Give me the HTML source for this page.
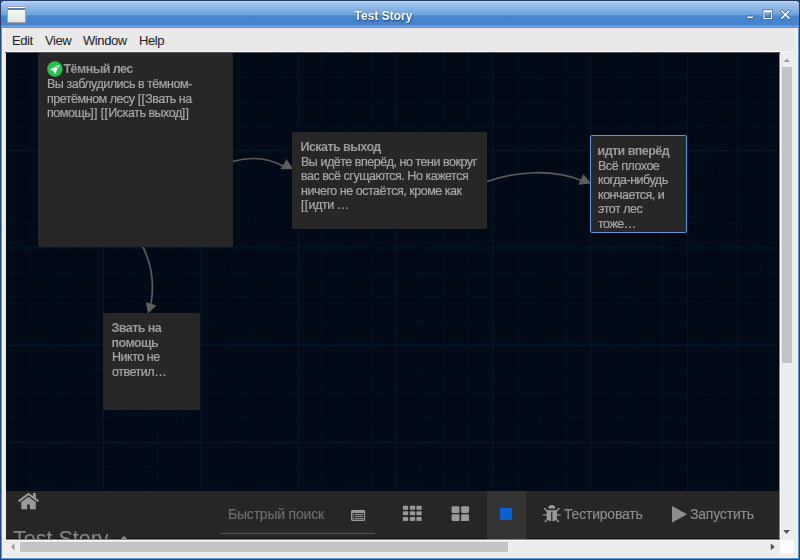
<!DOCTYPE html>
<html><head><meta charset="utf-8">
<style>
html,body{margin:0;padding:0;width:800px;height:560px;overflow:hidden;background:#1e3c64;}
*{box-sizing:border-box;}
body{font-family:"Liberation Sans",sans-serif;position:relative;}
.abs{position:absolute;}
#title{position:absolute;left:1px;top:1px;width:798px;height:27px;border-radius:3px 3px 0 0;
  background:linear-gradient(to bottom,#c8ddf4 0px,#a9c8ed 1.5px,#8db7e6 7px,#6ea2de 13.5px,#4a88d0 15px,#4382cc 20px,#4887cf 24px,#6fa6e4 25.5px,#74a9e6 26px,#3f7fcb 27px);}
#frameL{position:absolute;left:1px;top:27px;width:1px;height:532px;background:#5895dc;}
#frameR{position:absolute;left:798px;top:27px;width:1px;height:532px;background:#5895dc;}
#frameB{position:absolute;left:1px;top:558px;width:798px;height:1px;background:#5895dc;}
#content{position:absolute;left:2px;top:28px;width:796px;height:530px;background:#ededed;}
#menubar{position:absolute;left:6px;top:28px;width:788px;height:23px;background:#e9e9e9;}
.menu{position:absolute;top:0;font-size:13px;letter-spacing:-0.4px;color:#202020;line-height:24px;}
#canvas{position:absolute;left:6px;top:53px;width:773px;height:486px;background:#010a16;overflow:hidden;}
.card{position:absolute;background:#272727;border-radius:2px;}
.txt{position:absolute;will-change:transform;font-size:12.5px;letter-spacing:-0.47px;line-height:14.6px;color:#a8a8a8;white-space:nowrap;-webkit-text-stroke:0.2px #a8a8a8;}
.txt i{font-style:normal;letter-spacing:0.3px;}
.txt b{position:relative;left:-0.5px;font-weight:bold;letter-spacing:-0.55px;color:#9c9c9c;-webkit-text-stroke:0;}
#toolbar{position:absolute;left:6px;top:491px;width:773px;height:48px;background:#262626;}
.tb{position:absolute;will-change:transform;font-size:14px;letter-spacing:-0.2px;color:#8e8e8e;-webkit-text-stroke:0.15px currentColor;white-space:nowrap;line-height:16px;}
</style></head><body>
<div id="title"></div>
<div id="frameL"></div><div id="frameR"></div><div id="frameB"></div>
<div class="abs" style="left:0;top:27px;width:1px;height:533px;background:#264a7a"></div><div class="abs" style="left:799px;top:27px;width:1px;height:533px;background:#264a7a"></div><div class="abs" style="left:0;top:559px;width:800px;height:1px;background:#264a7a"></div>
<div id="content"></div>
<div class="abs" style="left:2px;top:28px;width:1px;height:530px;background:#f6f4f1"></div>
<div class="abs" style="left:2px;top:557px;width:796px;height:1px;background:#f6f4f1"></div>
<div class="abs" style="left:797px;top:28px;width:1px;height:530px;background:#f6f4f1"></div>
<div id="menubar"></div>
<div class="abs" style="left:4px;top:51px;width:790px;height:1px;background:#f6f6f6"></div>
<div class="abs" style="left:5px;top:52px;width:775px;height:1px;background:#505458"></div>
<!-- window icon -->
<div class="abs" style="left:7px;top:6px;width:19px;height:17px;border:1px solid #a8a49c;background:linear-gradient(#ffffff,#e4e4e0);border-radius:1px"></div>
<div class="abs" style="left:8px;top:8px;width:17px;height:1.5px;background:#5a7db4"></div>
<div class="abs" style="left:0px;top:7.5px;width:767px;text-align:center;font-size:12px;font-weight:bold;color:#ffffff;text-shadow:0.5px 0.5px 1.5px #1f3d66;line-height:16px;will-change:transform">Test Story</div>
<!-- title buttons -->
<svg class="abs" style="left:740px;top:6px" width="56" height="18">
  <rect x="7" y="10" width="6.5" height="2.6" rx="0.5" fill="#ffffff" stroke="#34598c" stroke-width="0.9"/>
  <rect x="24" y="4.8" width="7.6" height="7.8" fill="none" stroke="#34598c" stroke-width="2.6"/>
  <rect x="24" y="4.8" width="7.6" height="7.8" fill="none" stroke="#ffffff" stroke-width="1.2"/>
  <rect x="24" y="4.5" width="7.6" height="1.8" fill="#ffffff"/>
  <path d="M41.8 5.2 L49 12.2 M49 5.2 L41.8 12.2" stroke="#34598c" stroke-width="3" stroke-linecap="round"/>
  <path d="M41.8 5.2 L49 12.2 M49 5.2 L41.8 12.2" stroke="#ffffff" stroke-width="1.7" stroke-linecap="round"/>
</svg>
<div class="menu" style="left:12px;top:28.6px">Edit</div>
<div class="menu" style="left:45px;top:28.6px">View</div>
<div class="menu" style="left:83px;top:28.6px">Window</div>
<div class="menu" style="left:139px;top:28.6px">Help</div>

<div id="canvas">
<svg width="773" height="486" style="position:absolute;left:0;top:0"><rect x="24.04" y="0" width="1" height="486" fill="#021128"/><rect x="48.38" y="0" width="1" height="486" fill="#021128"/><rect x="72.72" y="0" width="1" height="486" fill="#021128"/><rect x="97.06" y="0" width="1" height="486" fill="#021935"/><rect x="121.40" y="0" width="1" height="486" fill="#021128"/><rect x="145.74" y="0" width="1" height="486" fill="#021128"/><rect x="170.08" y="0" width="1" height="486" fill="#021128"/><rect x="194.42" y="0" width="1" height="486" fill="#021935"/><rect x="218.76" y="0" width="1" height="486" fill="#021128"/><rect x="243.10" y="0" width="1" height="486" fill="#021128"/><rect x="267.44" y="0" width="1" height="486" fill="#021128"/><rect x="291.78" y="0" width="1" height="486" fill="#021935"/><rect x="316.12" y="0" width="1" height="486" fill="#021128"/><rect x="340.46" y="0" width="1" height="486" fill="#021128"/><rect x="364.80" y="0" width="1" height="486" fill="#021128"/><rect x="389.14" y="0" width="1" height="486" fill="#021935"/><rect x="413.48" y="0" width="1" height="486" fill="#021128"/><rect x="437.82" y="0" width="1" height="486" fill="#021128"/><rect x="462.16" y="0" width="1" height="486" fill="#021128"/><rect x="486.50" y="0" width="1" height="486" fill="#021935"/><rect x="510.84" y="0" width="1" height="486" fill="#021128"/><rect x="535.18" y="0" width="1" height="486" fill="#021128"/><rect x="559.52" y="0" width="1" height="486" fill="#021128"/><rect x="583.86" y="0" width="1" height="486" fill="#021935"/><rect x="608.20" y="0" width="1" height="486" fill="#021128"/><rect x="632.54" y="0" width="1" height="486" fill="#021128"/><rect x="656.88" y="0" width="1" height="486" fill="#021128"/><rect x="681.22" y="0" width="1" height="486" fill="#021935"/><rect x="705.56" y="0" width="1" height="486" fill="#021128"/><rect x="729.90" y="0" width="1" height="486" fill="#021128"/><rect x="754.24" y="0" width="1" height="486" fill="#021128"/><rect x="0" y="23.99" width="773" height="1" fill="#021128"/><rect x="0" y="48.33" width="773" height="1" fill="#021128"/><rect x="0" y="72.67" width="773" height="1" fill="#021128"/><rect x="0" y="97.01" width="773" height="1" fill="#021935"/><rect x="0" y="121.35" width="773" height="1" fill="#021128"/><rect x="0" y="145.69" width="773" height="1" fill="#021128"/><rect x="0" y="170.03" width="773" height="1" fill="#021128"/><rect x="0" y="194.37" width="773" height="1" fill="#021935"/><rect x="0" y="218.71" width="773" height="1" fill="#021128"/><rect x="0" y="243.05" width="773" height="1" fill="#021128"/><rect x="0" y="267.39" width="773" height="1" fill="#021128"/><rect x="0" y="291.73" width="773" height="1" fill="#021935"/><rect x="0" y="316.07" width="773" height="1" fill="#021128"/><rect x="0" y="340.41" width="773" height="1" fill="#021128"/><rect x="0" y="364.75" width="773" height="1" fill="#021128"/><rect x="0" y="389.09" width="773" height="1" fill="#021935"/><rect x="0" y="413.43" width="773" height="1" fill="#021128"/><rect x="0" y="437.77" width="773" height="1" fill="#021128"/><rect x="0" y="462.11" width="773" height="1" fill="#021128"/></svg>
</div>
<svg class="abs" style="left:0;top:0" width="800" height="560">
<g fill="none" stroke="#5c5c5c" stroke-width="1.7">
<path d="M232.5 161.5 C 250 156.5, 266 157, 283.5 166"/>
<path d="M486.8 181.5 C 515 171.5, 552 168.5, 581.5 180.5"/>
<path d="M142.9 247 C 150.5 262, 154.8 281, 151 304"/>
</g>
<g fill="#5e5e5e">
<path d="M286.6 158.9 L293 169.3 L280.6 169.2 Z"/>
<path d="M583.5 174.1 L591 183.5 L578.3 184.7 Z"/>
<path d="M145.8 302 L156.4 305.4 L148 313.5 Z"/>
</g>
</svg>
<div class="card" style="left:38px;top:53px;width:194.5px;height:194px;"></div>
<div class="card" style="left:292px;top:132px;width:194.7px;height:96.6px;"></div>
<div class="card" style="left:589.6px;top:135px;width:97.5px;height:98px;border:1px solid #6296de;"></div>
<div class="card" style="left:103.2px;top:312.9px;width:97.2px;height:96.7px;"></div>
<svg class="abs" style="left:46.7px;top:61px" width="16" height="16"><circle cx="7.85" cy="8" r="7.75" fill="#20c44b"/><path d="M12.5 3.9 C 12.2 6.0, 11.3 7.3, 9.9 8.7 L 7.3 11.2 L 5.0 8.9 L 7.6 6.4 C 9.0 5.0, 10.4 4.2, 12.5 3.9 Z" fill="#ffffff"/><path d="M7.6 6.6 L 4.8 6.9 L 2.9 9.4 L 5.9 8.7 Z" fill="#ffffff"/><path d="M9.6 8.6 L 9.3 11.4 L 6.8 13.3 L 7.5 10.3 Z" fill="#ffffff"/><circle cx="10.3" cy="6.4" r="0.85" fill="#20c44b"/></svg>
<div class="txt" style="left:64px;top:62.3px"><b>Тёмный лес</b></div>
<div class="txt" style="left:46.5px;top:76.9px">Вы заблудились в тёмном-<br>претёмном лесу <i>[[</i>Звать на<br>помощь<i>]]</i> <i>[[</i>Искать выход<i>]]</i></div>
<div class="txt" style="left:301px;top:139.5px"><b>Искать выход</b><br>Вы идёте вперёд, но тени вокруг<br>вас всё сгущаются. Но кажется<br>ничего не остаётся, кроме как<br><i>[[</i>идти …</div>
<div class="txt" style="left:598px;top:144.3px"><b>идти вперёд</b><br>Всё плохое<br>когда-нибудь<br>кончается, и<br>этот лес<br>тоже…</div>
<div class="txt" style="left:112px;top:320.5px"><b>Звать на</b><br><b>помощь</b><br>Никто не<br>ответил…</div>
<div id="toolbar"></div>
<div class="abs" style="left:6px;top:538px;width:773px;height:1px;background:#171717"></div>
<div class="abs" style="left:486.6px;top:491px;width:39.5px;height:48px;background:#343434"></div>
<svg class="abs" style="left:15px;top:490px" width="27" height="22"><rect x="18.1" y="3" width="2.7" height="5.5" fill="#9a9a9a"/><path d="M4.3 10.8 L13.56 3.95 L22.8 10.8" fill="none" stroke="#9a9a9a" stroke-width="2.1" stroke-linecap="round" stroke-linejoin="miter"/><path d="M6.3 11.9 L13.56 6.7 L20.8 11.9 L20.8 19.3 L14.9 19.3 L14.9 14.5 L12.2 14.5 L12.2 19.3 L6.3 19.3 Z" fill="#9a9a9a"/></svg>
<div class="abs" style="left:6px;top:491px;width:773px;height:48px;overflow:hidden"><div class="abs" style="left:6.6px;top:35.4px;font-size:21.5px;color:#878787;line-height:26px;white-space:nowrap;will-change:transform">Test Story</div></div>
<svg class="abs" style="left:119px;top:535px" width="10" height="4"><path d="M1.5 4.5 L5.1 0.9 L8.7 4.5 Z" fill="#8e8e8e"/></svg>
<div class="tb" style="left:227.6px;top:506px;color:#6f6f6f">Быстрый поиск</div>
<div class="abs" style="left:220px;top:533px;width:155px;height:1px;background:#555555"></div>
<svg class="abs" style="left:351px;top:510px" width="15" height="11"><rect x="0" y="0" width="14.1" height="10.9" rx="1.2" fill="#9a9a9a"/><rect x="1.4" y="3" width="11.5" height="6.6" fill="#262626"/><rect x="1.9" y="4" width="1.2" height="1" fill="#9a9a9a"/><rect x="3.9" y="4" width="8.1" height="1" fill="#9a9a9a"/><rect x="1.9" y="5.9" width="1.2" height="1" fill="#9a9a9a"/><rect x="3.9" y="5.9" width="8.1" height="1" fill="#9a9a9a"/><rect x="1.9" y="7.9" width="1.2" height="1" fill="#9a9a9a"/><rect x="3.9" y="7.9" width="8.1" height="1" fill="#9a9a9a"/></svg>
<svg class="abs" style="left:402px;top:505px" width="21" height="17"><rect x="0.9" y="0.7" width="5.3" height="4" rx="1" fill="#9a9a9a"/><rect x="7.9" y="0.7" width="5.3" height="4" rx="1" fill="#9a9a9a"/><rect x="14.4" y="0.7" width="5.3" height="4" rx="1" fill="#9a9a9a"/><rect x="0.9" y="6.3" width="5.3" height="4" rx="1" fill="#9a9a9a"/><rect x="7.9" y="6.3" width="5.3" height="4" rx="1" fill="#9a9a9a"/><rect x="14.4" y="6.3" width="5.3" height="4" rx="1" fill="#9a9a9a"/><rect x="0.9" y="11.9" width="5.3" height="4" rx="1" fill="#9a9a9a"/><rect x="7.9" y="11.9" width="5.3" height="4" rx="1" fill="#9a9a9a"/><rect x="14.4" y="11.9" width="5.3" height="4" rx="1" fill="#9a9a9a"/></svg>
<svg class="abs" style="left:451px;top:506px" width="19" height="16"><rect x="0.6" y="0.2" width="7.9" height="6.8" rx="1.2" fill="#9a9a9a"/><rect x="10.1" y="0.2" width="7.9" height="6.8" rx="1.2" fill="#9a9a9a"/><rect x="0.6" y="8.3" width="7.9" height="6.8" rx="1.2" fill="#9a9a9a"/><rect x="10.1" y="8.3" width="7.9" height="6.8" rx="1.2" fill="#9a9a9a"/></svg>
<div class="abs" style="left:500px;top:507.8px;width:12.4px;height:12.4px;background:#0b60d2"></div>
<svg class="abs" style="left:542px;top:503px" width="20" height="20">
<path d="M6.3 5.5 A 3.5 3.6 0 0 1 13.3 5.5 Z" fill="#9a9a9a"/>
<path d="M4.7 7.2 L14.9 7.2 L14.9 14.8 C 14.9 17.2, 12.4 18.2, 10.4 18.2 L10.4 8.6 L9.2 8.6 L9.2 18.2 C 7.2 18.2, 4.7 17.2, 4.7 14.8 Z" fill="#9a9a9a"/>
<g stroke="#9a9a9a" stroke-width="1.4" stroke-linecap="round">
<path d="M2.6 5.6 L5.0 7.9 M17.0 5.6 L14.6 7.9 M1.4 11.9 L5 11.9 M18.2 11.9 L14.6 11.9 M3.2 18.4 L5.4 16.2 M16.4 18.4 L14.2 16.2"/>
</g></svg>
<div class="tb" style="left:563.5px;top:506px">Тестировать</div>
<svg class="abs" style="left:672px;top:506px" width="16" height="17"><path d="M0 0 L15.2 8.25 L0 16.5 Z" fill="#8e8e8e"/></svg>
<div class="tb" style="left:690px;top:506px">Запустить</div>
<div class="abs" style="left:778px;top:53px;width:1px;height:438px;background:#00050c"></div>
<div class="abs" style="left:779px;top:53px;width:1px;height:487px;background:#7d8187"></div>
<div class="abs" style="left:6px;top:539px;width:774px;height:1px;background:#7d7d7d"></div>
<div class="abs" style="left:780px;top:53px;width:1px;height:488px;background:#ffffff"></div>
<div class="abs" style="left:6px;top:540px;width:775px;height:1px;background:#ffffff"></div>
<div class="abs" style="left:781px;top:53px;width:1px;height:488px;background:#e4e4e4"></div>
<div class="abs" style="left:6px;top:541px;width:775px;height:1px;background:#e4e4e4"></div>
<div class="abs" style="left:782px;top:67px;width:10px;height:296px;background:#c3c3c3"></div>
<div class="abs" style="left:20px;top:542px;width:488px;height:10px;background:#c3c3c3"></div>
<div class="abs" style="left:779.5px;top:539.5px;width:14.5px;height:14.5px;background:#ffffff"></div>
<svg class="abs" style="left:0;top:0" width="800" height="560"><path d="M783.3 62 L786.7 58.7 L790.1 62 Z" fill="#9a9a9a"/><path d="M783.2 530 L786.6 534 L790 530 Z" fill="#555555"/><path d="M14.5 543 L11 546.7 L14.5 550.4 Z" fill="#9a9a9a"/><path d="M770.8 543.4 L774.9 546.8 L770.8 550.2 Z" fill="#555555"/></svg>
</body></html>
